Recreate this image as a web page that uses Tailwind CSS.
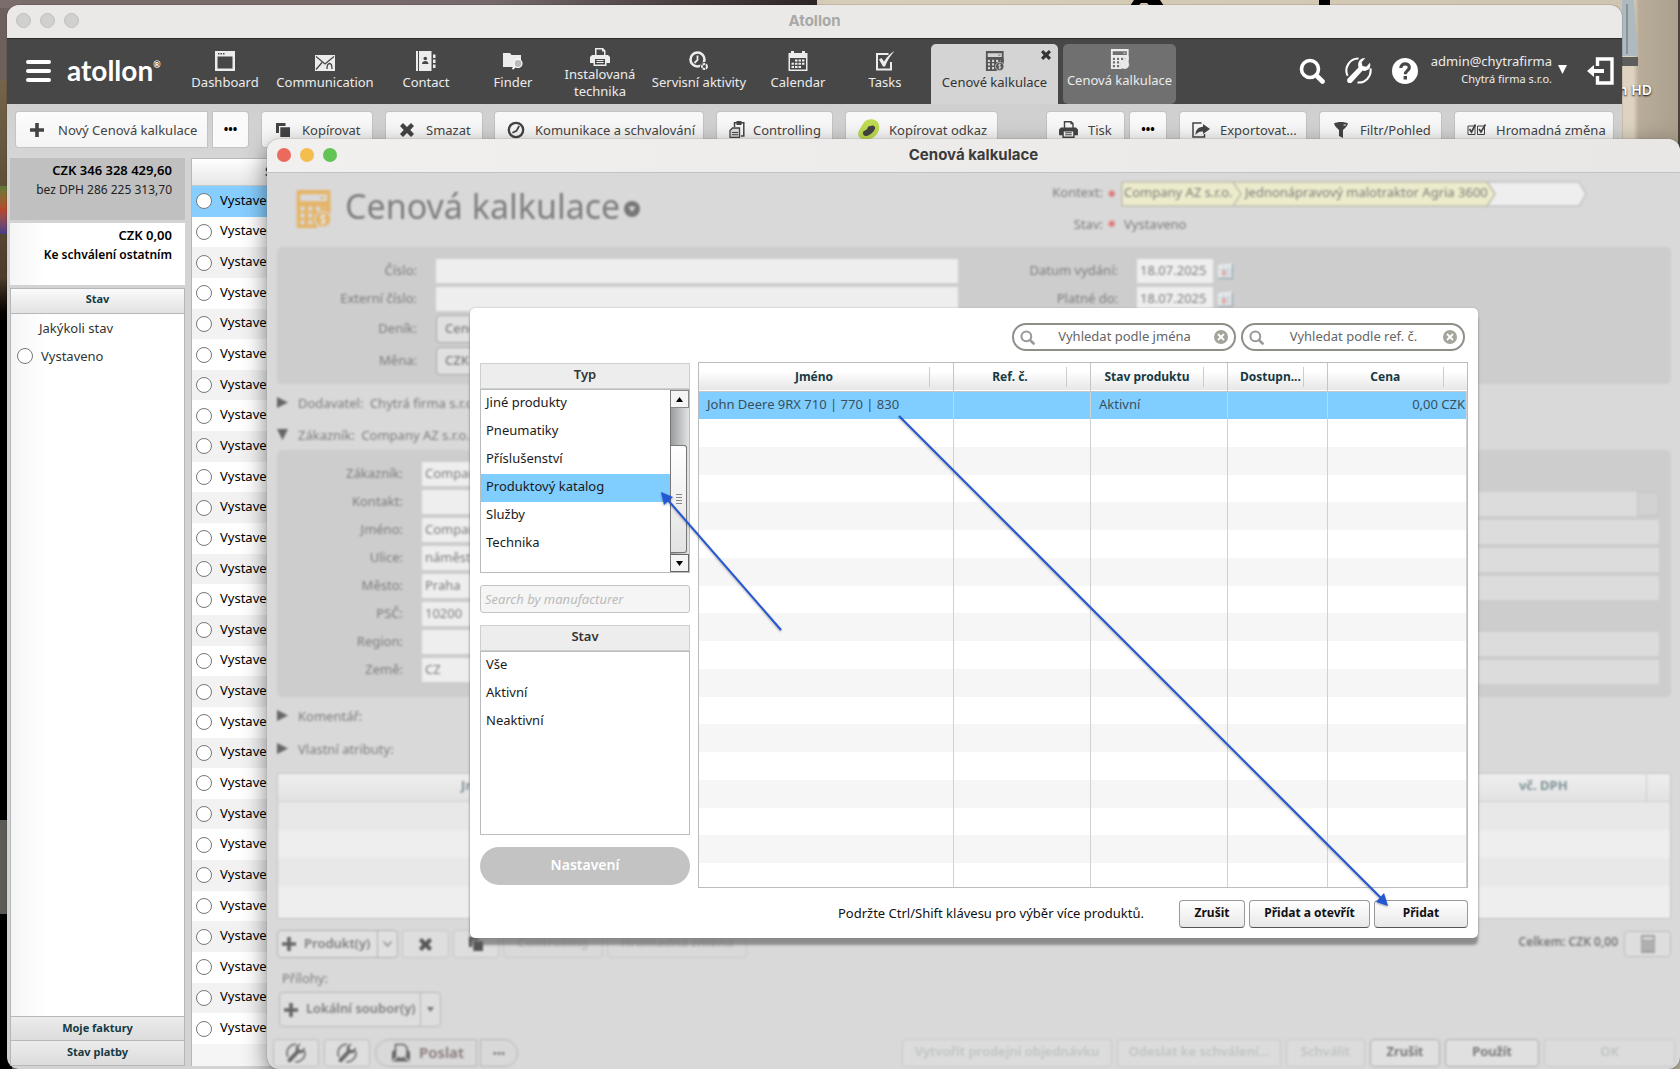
<!DOCTYPE html>
<html lang="cs">
<head>
  <meta charset="UTF-8" />
  <meta name="viewport" content="width=device-width, initial-scale=1.0"/>
  <title>Atollon</title>
  <script src="https://cdn.jsdelivr.net/npm/@tailwindcss/browser@4"></script>
</head>
<body class="relative h-screen overflow-hidden bg-black font-['Noto_Sans','Open_Sans',sans-serif] text-[13px] leading-5 text-[#333]">

  <!-- Icons -->
  <svg class="hidden">
    <symbol id="i-dashboard" viewBox="0 0 20 20"><path fill="currentColor" fill-rule="evenodd" d="M0 0h20v20H0zM2.500 5.500v12h15v-12zM3 2v1.500h1.500V2zM5.500 2v1.500H7V2zM8 2v1.500h1.500V2z"/></symbol>
    <symbol id="i-mail" viewBox="0 0 20 16"><path fill="currentColor" d="M0 0h20v16H0z"/><path d="M1 1.500l9 7.500 9-7.500M1 14.500l6-7M12 14c0-3 .5-5.500 2.500-5.500S17 11 17 14" fill="none" stroke="#474747" stroke-width="1.300"/></symbol>
    <symbol id="i-contact" viewBox="0 0 20 20"><path fill="currentColor" d="M0 0h2v20H0zM3 0h12.500v20H3zM17 3.500h2.500v3.500H17zM17 8.500h2.500V12H17zM17 13.500h2.500V17H17z"/><circle cx="9.300" cy="7.500" r="1.800" fill="#474747"/><path fill="#474747" d="M6 13c0-4 6.500-4 6.500 0z"/></symbol>
    <symbol id="i-finder" viewBox="0 0 20 18"><path fill="currentColor" d="M0 1h7l1.500 2H18v12H0z"/><circle cx="15" cy="11.500" r="4" fill="#b9b9b9" stroke="#fff" stroke-width="1.200"/><path d="M12 14.500L9.500 17" stroke="#fff" stroke-width="1.800"/></symbol>
    <symbol id="i-print" viewBox="0 0 20 18"><path fill="currentColor" fill-rule="evenodd" d="M5 0h8l2.500 2.500V7h2.500l2 2v6h-3.500v3H3.500v-3H0V9l2-2h3zM6.500 1.500V7H14V3.500h-2v-2zM5 11v5.500h10V11z"/><path fill="currentColor" d="M6.500 12h7v1h-7zM6.500 14h7v1h-7z"/></symbol>
    <symbol id="i-clockgear" viewBox="0 0 20 20"><circle cx="8.500" cy="8.500" r="7" fill="none" stroke="currentColor" stroke-width="2.600"/><path d="M8.500 4.500v4.500L5.500 12" fill="none" stroke="currentColor" stroke-width="1.800"/><circle cx="15.500" cy="15.500" r="4.500" fill="#474747"/><circle cx="15.500" cy="15.500" r="2.500" fill="none" stroke="currentColor" stroke-width="2" stroke-dasharray="2.500 .7"/></symbol>
    <symbol id="i-clock" viewBox="0 0 20 20"><circle cx="10" cy="10" r="8" fill="none" stroke="currentColor" stroke-width="2.600"/><path d="M13.500 5.500L10.500 11 6 13" fill="none" stroke="currentColor" stroke-width="2"/></symbol>
    <symbol id="i-calendar" viewBox="0 0 20 20"><path fill="currentColor" fill-rule="evenodd" d="M.5 2H3V0h3v2h8V0h3v2h2.500v18H.5zM2 7v11.500h16V7z"/><path fill="currentColor" d="M7 8.500h2.500v2H7zM10.500 8.500H13v2h-2.500zM14 8.500h2.500v2H14zM3.500 11.700H6v2H3.500zM7 11.700h2.500v2H7zM10.500 11.700H13v2h-2.500zM14 11.700h2.500v2H14zM3.500 15H6v2H3.500zM7 15h2.500v2H7zM10.500 15H13v2h-2.500z"/></symbol>
    <symbol id="i-tasks" viewBox="0 0 20 20"><path d="M13.500 3H2v15.500h14V11" fill="none" stroke="currentColor" stroke-width="2"/><path fill="currentColor" d="M4 8.500l2.500-1.500L9 10.500C12 6 15 2.500 19.500 0 15.500 4.500 12.500 9 10 15.500H8z"/></symbol>
    <symbol id="i-calc" viewBox="0 0 20 22"><path fill="currentColor" fill-rule="evenodd" d="M0 0h19.500v12.500H16V9H0zM2 2.500v4h15.500v-4z"/><path fill="currentColor" fill-rule="evenodd" d="M0 8h19.500v6l-8 8H0zM2.200 9.500V12h2.300V9.500zM6.700 9.500V12H9V9.500zM11.200 9.500V12h2.300V9.500zM15.500 9.500V11h2V9.500zM2.200 13.500V16h2.300v-2.500zM6.700 13.500V16H9v-2.500zM2.200 17.500V20h2.300v-2.500zM6.700 17.500V20H9v-2.500z"/><path fill="currentColor" d="M13.500 4h2.500v1h-2.500z"/><circle cx="15.200" cy="17" r="4.600" fill="currentColor" stroke="#d8d8d8" stroke-width=".8"/><path d="M16.700 15.200c-1-1-3-.5-2.800.6.2 1.300 2.800.8 2.700 2.200-.1 1.200-2.100 1.400-3 .4M15.200 13.800v6.400" fill="none" stroke="#e2e2e2" stroke-width=".8"/></symbol>
    <symbol id="i-search" viewBox="0 0 26 26"><circle cx="11" cy="11" r="8.500" fill="none" stroke="currentColor" stroke-width="3.600"/><path d="M17.500 17.500l6 6" stroke="currentColor" stroke-width="4.600" stroke-linecap="round"/></symbol>
    <symbol id="i-wrench" viewBox="0 0 26 26"><path d="M2.500 18A11.500 11.500 0 0 1 13 1.500M24.500 11A11.500 11.500 0 0 1 12 24.500" fill="none" stroke="currentColor" stroke-width="2"/><path fill="currentColor" d="M19.500 1l-3.500 4 .8 3.700 3.800.6L24 5.500c1.800 5-2.500 9-7 7.600L6.500 24.500c-2.500 2-6-1-3.800-3.800L13 10c-1.500-4.800 2-9.500 6.500-9z"/></symbol>
    <symbol id="i-help" viewBox="0 0 26 26"><circle cx="13" cy="13" r="13" fill="currentColor"/><path d="M8.800 10c0-5.600 8.700-5.200 8.500-.4-.1 3-4 3.200-4 6.600" fill="none" stroke="#474747" stroke-width="3.200"/><path fill="#474747" d="M11.600 18h3.400v3.400h-3.400z"/></symbol>
    <symbol id="i-logout" viewBox="0 0 27 28"><path d="M10.500 9V2H25v24H10.500v-7" fill="none" stroke="currentColor" stroke-width="3.400"/><path fill="currentColor" d="M0 14l7-6v4h10v4H7v4z"/></symbol>
    <symbol id="i-plus" viewBox="0 0 14 14"><path fill="currentColor" d="M5.200 0h3.600v5.200H14v3.600H8.800V14H5.200V8.800H0V5.200h5.200z"/></symbol>
    <symbol id="i-x" viewBox="0 0 14 14"><path fill="currentColor" d="M3 0l4 4 4-4 3 3-3.700 4L14 11l-3 3-4-4-4 4-3-3 3.700-4L0 3z"/></symbol>
    <symbol id="i-copy" viewBox="0 0 14 14"><path fill="currentColor" d="M0 0h9.500v3H3v7H0zM4.300 4.300H14V14H4.300z"/></symbol>
    <symbol id="i-clipboard" viewBox="0 0 16 17"><path d="M5.500 6V1.800h9.300V15h-3" fill="none" stroke="currentColor" stroke-width="1.500"/><path fill="currentColor" d="M7.500 0h5v4h-5z"/><path d="M3.500 7h7v9.300H1V9.500z" fill="#ddd" stroke="currentColor" stroke-width="1.300"/><path d="M3 11.500h6M3 13.700h6" stroke="currentColor"/></symbol>
    <symbol id="i-export" viewBox="0 0 18 16"><path d="M9.500 1H1v14h11.500v-3" fill="none" stroke="currentColor" stroke-width="1.500"/><path fill="currentColor" d="M11 2l7 5-7 5V9.500c-3.500-.5-5.500.8-7.500 3.500C3.500 8 6.500 5 11 4.800z"/></symbol>
    <symbol id="i-filter" viewBox="0 0 14 16"><path fill="currentColor" d="M0 1.500C3-.5 11-.5 14 1.500 13.500 4 11 6 9 8v8l-4-2V8C3 6 .5 4 0 1.500z"/><path d="M9.500 3h2.500" stroke="#eee"/></symbol>
    <symbol id="i-checks" viewBox="0 0 19 12"><path d="M1 2h7v8.500H1zM10.500 2h7v8.500h-7z" fill="none" stroke="currentColor"/><path d="M2.500 5L4.500 8 8.500.5M12 5l2 3L18.500.5" fill="none" stroke="currentColor" stroke-width="1.700"/></symbol>
    <symbol id="i-send" viewBox="0 0 20 20"><path fill="currentColor" d="M1 9l3-3v6l6 3 6-3V6l3 3v9.500H1z"/><path d="M4.500 12V1.500h8.500l3 3V12" fill="none" stroke="currentColor" stroke-width="1.500"/><path d="M1.500 18l5.500-4.500M18.500 18L13 13.500" fill="none" stroke="#ddd" stroke-width="1.200"/></symbol>
    <symbol id="i-date" viewBox="0 0 15 16"><path fill="#e6eaec" d="M0 2l15-2v15H0z"/><path d="M0 15.500h14.500V1" fill="none" stroke="#8fa3ad" stroke-width="1.400"/><path d="M1 7h13M1 11h13M5.500 3v12M10 3v12" stroke="#b3c2ca" stroke-width=".8"/><path fill="#e5a9a6" d="M4 7.500h4v5H4z"/></symbol>
    <symbol id="i-clear" viewBox="0 0 14 14"><circle cx="7" cy="7" r="7" fill="#a4a49b"/><path d="M4 4l6 6M10 4l-6 6" stroke="#fff" stroke-width="1.800"/></symbol>
  </svg>

  <!-- Desktop wallpaper -->
  <div class="absolute inset-0 bg-linear-to-r from-[#6d5f5c] via-[#d8cdb8] via-50% to-[#cfc4ae]"></div>
  <div class="absolute left-0 top-0 h-2 w-[817px] bg-linear-to-r from-[#7b6d6a] via-[#75696a] via-60% to-[#2d2525]"></div>
  <svg class="absolute right-[350px] top-0 h-[6px] w-[208px]" viewBox="0 0 208 6"><path d="M12 0h26l4 6H28l-3-3h-6l-3 3H8zM197 0h11v6h-11z"/></svg>
  <div class="absolute bottom-0 left-0 top-20 w-3 bg-linear-to-b from-[#75644a] from-0% via-[#4c3d2b] via-20% to-black to-25%"></div>
  <div class="absolute left-0 top-[186px] h-12 w-2 bg-linear-to-b from-[#5c7a37] via-[#b5462c] to-[#4b3c86]"></div>
  <div class="absolute bottom-[155px] left-0 h-[94px] w-2 bg-[#5b5a54]"></div>
  <div class="absolute right-0 top-0 h-40 w-[58px] border-r-2 border-[#4a443c] bg-linear-to-r from-[#ddd3c0] from-20% via-[#b9ad9a] via-30% to-[#ab9f8e]"></div>
  <svg class="absolute right-[42px] top-0 h-[68px] w-4" viewBox="0 0 16 68"><path fill="#aebac0" d="M0 0h12l4 56H0z"/><path fill="#5d5d5b" d="M0 57h16v9H0z"/><path d="M5 4v50" stroke="#60686c"/></svg>
  <span class="absolute right-7 top-20 text-[14px] font-semibold text-white [text-shadow:0_1px_2px_#000]">n HD</span>

  <!-- Main window -->
  <div class="absolute bottom-0 left-[7px] right-[58px] top-[5px] flex flex-col overflow-hidden rounded-xl bg-[#d3d3d3] shadow-[0_0_1px_#000]">
    <div class="flex h-[33px] shrink-0 items-center bg-[#eae9e7] px-[9px] pb-[2px]">
      <div class="flex flex-1 gap-[9px]">
        <span class="h-[15px] w-[15px] rounded-full border border-[#bfbfbd] bg-[#d0d0ce]"></span>
        <span class="h-[15px] w-[15px] rounded-full border border-[#bfbfbd] bg-[#d0d0ce]"></span>
        <span class="h-[15px] w-[15px] rounded-full border border-[#bfbfbd] bg-[#d0d0ce]"></span>
      </div>
      <h1 class="font-[Inter,sans-serif] text-[15px] font-bold text-[#a8a8a6]">Atollon</h1>
      <div class="flex-1"></div>
    </div>

    <!-- Navigation -->
    <nav class="flex h-[66px] shrink-0 border-t border-[#2c2c2c] bg-[#474747] text-[#ececec]">
      <button class="ml-[19px] flex w-[25px] flex-col justify-center gap-[5px] pb-[2px]" aria-label="Menu">
        <span class="h-1 w-full rounded-sm bg-white"></span>
        <span class="h-1 w-full rounded-sm bg-white"></span>
        <span class="h-1 w-full rounded-sm bg-white"></span>
      </button>
      <div class="ml-4 flex w-[108px] items-center pb-1 font-[Lato,sans-serif] text-[28px] font-bold text-white">atollon<sup class="text-[9px]">®</sup></div>
      <a href="#" class="flex w-[100px] flex-col items-center gap-px pt-3"><svg class="h-5 w-5"><use href="#i-dashboard"/></svg>Dashboard</a>
      <a href="#" class="flex w-[100px] flex-col items-center gap-px pt-3"><svg class="h-5 w-5 pt-1"><use href="#i-mail"/></svg>Communication</a>
      <a href="#" class="flex w-[102px] flex-col items-center gap-px pt-3"><svg class="h-5 w-5"><use href="#i-contact"/></svg>Contact</a>
      <a href="#" class="flex w-[72px] flex-col items-center gap-px pt-3"><svg class="h-5 w-5"><use href="#i-finder"/></svg>Finder</a>
      <a href="#" class="flex w-[102px] flex-col items-center pt-[9px] text-center leading-[17px]"><svg class="h-[18px] w-5"><use href="#i-print"/></svg>Instalovaná<br>technika</a>
      <a href="#" class="flex w-[96px] flex-col items-center gap-px whitespace-nowrap pt-3"><svg class="h-5 w-5"><use href="#i-clockgear"/></svg>Servisní aktivity</a>
      <a href="#" class="flex w-[102px] flex-col items-center gap-px pt-3"><svg class="h-5 w-5"><use href="#i-calendar"/></svg>Calendar</a>
      <a href="#" class="flex w-[72px] flex-col items-center gap-px pt-3"><svg class="h-5 w-5"><use href="#i-tasks"/></svg>Tasks</a>
      <a href="#" class="relative ml-[10px] mt-[5px] flex w-[127px] flex-col items-center gap-px rounded-t-[5px] bg-[#d4d4d4] pt-[7px] text-[#333]"><svg class="h-5 w-5 text-[#555]"><use href="#i-calc"/></svg>Cenové kalkulace<svg class="absolute right-[7px] top-[6px] h-[10px] w-[10px]"><use href="#i-x"/></svg></a>
      <a href="#" class="ml-[5px] mt-[5px] flex w-[113px] flex-col items-center gap-px rounded-[5px] bg-[#707070] pt-[5px]"><svg class="h-5 w-5"><use href="#i-calc"/></svg>Cenová kalkulace</a>
      <div class="ml-auto mr-[8px] flex items-center gap-5 pb-[2px] text-white">
        <button aria-label="Hledat"><svg class="h-[26px] w-[26px]"><use href="#i-search"/></svg></button>
        <button aria-label="Nastavení"><svg class="h-[27px] w-[27px]"><use href="#i-wrench"/></svg></button>
        <button aria-label="Nápověda"><svg class="h-[26px] w-[26px]"><use href="#i-help"/></svg></button>
        <button class="-ml-[7px] flex items-center gap-[6px] pb-[2px] text-right leading-[17px] text-[#ececec]"><span>admin@chytrafirma<br><span class="text-[11px]">Chytrá firma s.r.o.</span></span><svg class="h-[9px] w-[9px]" viewBox="0 0 9 9"><path fill="#fff" d="M0 0h9L4.500 9z"/></svg></button>
        <button aria-label="Odhlásit"><svg class="h-[28px] w-[27px]"><use href="#i-logout"/></svg></button>
      </div>
    </nav>

    <!-- Toolbar -->
    <div class="flex h-[54px] shrink-0 items-start bg-linear-to-b from-[#cfcfcf] to-[#d6d6d6] px-[9px] pt-2 text-[#444]">
      <button class="flex h-[35px] w-[191px] items-center gap-[14px] rounded-l-[3px] bg-linear-to-b from-[#fcfcfc] to-[#f4f4f4] pl-[14px] shadow-[0_0_0_1px_#c3c3c3]"><svg class="h-[14px] w-[14px]"><use href="#i-plus"/></svg>Nový Cenová kalkulace</button>
      <button class="ml-[6px] h-[35px] w-[35px] rounded-r-[3px] bg-[#fafafa] text-[12px] font-bold text-black shadow-[0_0_0_1px_#c3c3c3]">•••</button>
      <button class="ml-[14px] flex h-[35px] w-[110px] items-center gap-3 rounded-[3px] bg-[#f8f8f8] pl-[14px] shadow-[0_0_0_1px_#c3c3c3]"><svg class="h-[14px] w-[14px]"><use href="#i-copy"/></svg>Kopírovat</button>
      <button class="ml-[14px] flex h-[35px] w-[96px] items-center gap-3 rounded-[3px] bg-[#f8f8f8] pl-[14px] shadow-[0_0_0_1px_#c3c3c3]"><svg class="h-[14px] w-[14px]"><use href="#i-x"/></svg>Smazat</button>
      <button class="ml-[13px] flex h-[35px] w-[208px] items-center gap-[10px] rounded-[3px] bg-[#f8f8f8] pl-3 shadow-[0_0_0_1px_#c3c3c3]"><svg class="h-[18px] w-[18px]"><use href="#i-clock"/></svg>Komunikace a schvalování</button>
      <button class="ml-[14px] flex h-[35px] w-[115px] items-center gap-2 rounded-[3px] bg-[#f8f8f8] pl-3 shadow-[0_0_0_1px_#c3c3c3]"><svg class="h-[17px] w-4"><use href="#i-clipboard"/></svg>Controlling</button>
      <button class="ml-[14px] flex h-[35px] w-[151px] items-center gap-[9px] rounded-[3px] bg-[#f8f8f8] pl-3 shadow-[0_0_0_1px_#c3c3c3]"><svg class="h-[22px] w-[22px]" viewBox="0 0 22 22"><path fill="#bfdc52" d="M9 1c5-2 11 0 12 5s-1 9-5 12-11 4-14 1-2-6 0-9 3-7 7-9z"/><path fill="#444" d="M5 14c0-3 3-2 4-4s1-3 3-3 2-1 4 0 1 4-1 6-5 4-7 4-3-1-3-3z"/></svg>Kopírovat odkaz</button>
      <button class="ml-auto flex h-[35px] w-[77px] items-center gap-[10px] rounded-[3px] bg-[#f8f8f8] pl-3 shadow-[0_0_0_1px_#c3c3c3]"><svg class="h-[17px] w-[19px]"><use href="#i-print"/></svg>Tisk</button>
      <button class="ml-[6px] h-[35px] w-9 rounded-[3px] bg-[#fafafa] text-[12px] font-bold text-black shadow-[0_0_0_1px_#c3c3c3]">•••</button>
      <button class="ml-[14px] flex h-[35px] w-[126px] items-center gap-[10px] rounded-[3px] bg-[#f8f8f8] pl-3 shadow-[0_0_0_1px_#c3c3c3]"><svg class="h-4 w-[18px]"><use href="#i-export"/></svg>Exportovat...</button>
      <button class="ml-[14px] flex h-[35px] w-[121px] items-center gap-3 rounded-[3px] bg-[#f8f8f8] pl-[14px] shadow-[0_0_0_1px_#c3c3c3]"><svg class="h-4 w-[14px]"><use href="#i-filter"/></svg>Filtr/Pohled</button>
      <button class="ml-[14px] flex h-[35px] w-[158px] items-center gap-[10px] whitespace-nowrap rounded-[3px] bg-[#f8f8f8] pl-3 shadow-[0_0_0_1px_#c3c3c3]"><svg class="h-3 w-[19px]"><use href="#i-checks"/></svg>Hromadná změna</button>
    </div>

    <div class="flex min-h-0 flex-1 pb-[3px] pl-[3px]">
      <!-- Summary and filters -->
      <aside class="mr-[6px] flex w-[175px] shrink-0 flex-col">
        <div class="h-[62px] bg-[#c0c0c0] pr-[13px] pt-[2px] text-right text-[#222]"><p class="font-semibold text-black">CZK 346 328 429,60</p><p class="text-[12px]">bez DPH 286 225 313,70</p></div>
        <div class="mt-[3px] h-[62px] bg-linear-to-r from-[#f5f5f5] to-white to-20% pr-[13px] pt-[2px] text-right text-black"><p class="font-semibold">CZK 0,00</p><p class="text-[12px] font-semibold">Ke schválení ostatním</p></div>
        <button class="mt-[3px] h-[26px] border border-[#b4b8ba] bg-linear-to-b from-[#fafafa] to-[#e2e2e2] pb-1 text-[11px] font-bold text-[#163a43]">Stav</button>
        <div class="flex-1 border-x border-[#b4b8ba] bg-linear-to-r from-[#f5f5f5] to-white to-20%">
          <p class="pl-7 leading-7">Jakýkoli stav</p>
          <label class="flex h-7 items-center gap-2 pl-[6px]"><input type="radio" name="stav" class="h-4 w-4 appearance-none rounded-full border border-[#777] bg-white"/>Vystaveno</label>
        </div>
        <button class="h-[25px] border border-[#b4b8ba] bg-linear-to-b from-[#ececec] to-[#dcdcdc] pb-[2px] text-[11px] font-bold text-[#163a43]">Moje faktury</button>
        <button class="h-[25px] border border-t-0 border-[#b4b8ba] bg-linear-to-b from-[#ececec] to-[#dcdcdc] pb-[2px] text-[11px] font-bold text-[#163a43]">Stav platby</button>
      </aside>

      <!-- Quotation list -->
      <div class="flex min-w-0 flex-1 flex-col border-l border-t border-[#b4b8ba] bg-[#f5f5f5]">
        <div class="h-[27px] shrink-0 border-b border-[#c8c8c8] bg-linear-to-b from-white to-[#e6e6e6] pl-[73px] font-bold leading-6 text-[#163a43]">Stav</div>
        <div id="quoteList" class="flex min-h-0 flex-1 flex-col"></div>
        <div class="h-[22px] shrink-0"></div>
      </div>
    </div>
  </div>

  <!-- Quotation window -->
  <div class="absolute bottom-0 left-[267px] right-0 top-[139px] flex flex-col overflow-hidden rounded-xl bg-[#d9d9d9] shadow-[0_0_1px_#555,0_8px_24px_rgba(0,0,0,0.5)]">
    <div class="flex h-[34px] shrink-0 items-center border-b border-[#c2c2c2] bg-linear-to-r from-[#f1f0ef] to-[#e8e7e5] px-[10px] pb-[2px]">
      <div class="flex flex-1 gap-[9px]">
        <span class="h-[14px] w-[14px] rounded-full bg-[#ec695e]"></span>
        <span class="h-[14px] w-[14px] rounded-full bg-[#f4be4f]"></span>
        <span class="h-[14px] w-[14px] rounded-full bg-[#61c454]"></span>
      </div>
      <h2 class="font-[Inter,sans-serif] text-[15px] font-bold text-[#3b3b3b]">Cenová kalkulace</h2>
      <div class="flex-1"></div>
    </div>

    <div class="flex flex-1 flex-col pl-[10px] pr-[9px] text-[#7d7d7d] blur-[1px] [&_label]:pb-[3px]">
      <!-- Record header -->
      <header class="flex h-[74px] shrink-0">
        <svg class="ml-[18px] mt-[17px] h-[38px] w-[38px] text-[#e5b468]"><use href="#i-calc"/></svg>
        <h3 class="ml-3 mt-[9px] text-[34px] leading-[48px]">Cenová kalkulace</h3>
        <svg class="ml-1 mt-[28px] h-4 w-4" viewBox="0 0 16 16"><circle cx="8" cy="8" r="8" fill="#777"/><path fill="#d9d9d9" d="M4.500 5.500h7L8 11z"/></svg>
        <div class="ml-auto mr-[84px] grid grid-cols-[auto_18px_466px] content-start items-center gap-y-[7px] pt-[8px]">
          <span class="pb-1 text-right">Kontext:</span><span class="text-center text-[9px] font-bold text-[#df7777]">✱</span>
          <div class="relative flex h-[26px] items-center">
            <svg class="absolute inset-0 h-full w-full" viewBox="0 0 466 26"><path fill="#eee" stroke="#c4c4c4" stroke-width="1.500" d="M366 1h92l7 12-7 12h-92l8-12z"/><path fill="#ecebcb" stroke="#c0c0b0" stroke-width="1.500" d="M112 1h254l8 12-8 12H112l8-12zM1 1h111l8 12-8 12H1z"/></svg>
            <a href="#" class="relative w-[121px] whitespace-nowrap pb-1 pl-[3px]">Company AZ s.r.o.</a><a href="#" class="relative whitespace-nowrap pb-1 pl-[3px]">Jednonápravový malotraktor Agria 3600</a>
          </div>
          <span class="text-right">Stav:</span><span class="text-center text-[9px] font-bold text-[#df7777]">✱</span><span class="pl-[3px]">Vystaveno</span>
        </div>
      </header>

      <!-- Document panel -->
      <section class="flex h-[137px] shrink-0 rounded-[5px] bg-[#cdcdcd] pt-3">
        <div class="grid w-[681px] grid-cols-[140px_1fr] content-start items-center gap-x-[19px] gap-y-1">
          <label for="cislo" class="text-right">Číslo:</label><input id="cislo" class="h-6 bg-[#eee]"/>
          <label for="extcislo" class="text-right">Externí číslo:</label><input id="extcislo" class="h-6 bg-[#eee]"/>
          <label for="denik" class="text-right">Deník:</label><select id="denik" class="h-7 w-40 appearance-none rounded-[4px] border border-[#a9a9a9] bg-[#e0e0e0] pb-[2px] pl-2 font-medium"><option>Cenová kalkulace</option></select>
          <label for="mena" class="text-right">Měna:</label><select id="mena" class="h-7 w-40 appearance-none rounded-[4px] border border-[#a9a9a9] bg-[#e0e0e0] pb-[2px] pl-2 font-medium"><option>CZK</option></select>
        </div>
        <div class="ml-auto mr-[438px] grid grid-cols-[auto_76px_20px] content-start items-center gap-y-1">
          <label for="vydani" class="mr-[19px]">Datum vydání:</label><input id="vydani" value="18.07.2025" class="h-6 w-[76px] bg-[#eee] pb-[3px] pl-[3px]"/><svg class="ml-[5px] h-4 w-[15px]"><use href="#i-date"/></svg>
          <label for="platne" class="mr-[19px] text-right">Platné do:</label><input id="platne" value="18.07.2025" class="h-6 w-[76px] bg-[#eee] pb-[3px] pl-[3px]"/><svg class="ml-[5px] h-4 w-[15px]"><use href="#i-date"/></svg>
        </div>
      </section>

      <button class="mt-[2px] flex h-[33px] shrink-0 items-center gap-[10px]"><svg class="h-[11px] w-[11px]" viewBox="0 0 11 11"><path fill="#666" d="M0 0l11 5.500L0 11z"/></svg>Dodavatel:&ensp;Chytrá firma s.r.o.,</button>
      <button class="flex h-[31px] shrink-0 items-center gap-[10px]"><svg class="h-[11px] w-[11px]" viewBox="0 0 11 11"><path fill="#666" d="M0 0h11L5.500 11z"/></svg>Zákazník:&ensp;Company AZ s.r.o.,</button>

      <!-- Customer panel -->
      <section class="flex h-[247px] shrink-0 justify-between rounded-[5px] bg-[#cdcdcd] pr-3 pt-3">
        <div class="grid w-[680px] grid-cols-[126px_1fr] content-start items-center gap-x-[19px] gap-y-1">
          <label for="zakaznik" class="text-right">Zákazník:</label><input id="zakaznik" value="Company AZ s.r.o." class="h-6 bg-[#eee] pb-[3px] pl-[3px]"/>
          <label for="kontakt" class="text-right">Kontakt:</label><input id="kontakt" class="h-6 bg-[#eee]"/>
          <label for="jmeno" class="text-right">Jméno:</label><input id="jmeno" value="Company AZ s.r.o." class="h-6 bg-[#eee] pb-[3px] pl-[3px]"/>
          <label for="ulice" class="text-right">Ulice:</label><input id="ulice" value="náměstí" class="h-6 bg-[#eee] pb-[3px] pl-[3px]"/>
          <label for="mesto" class="text-right">Město:</label><input id="mesto" value="Praha" class="h-6 bg-[#eee] pb-[3px] pl-[3px]"/>
          <label for="psc" class="text-right">PSČ:</label><input id="psc" value="10200" class="h-6 bg-[#eee] pb-[3px] pl-[3px]"/>
          <label for="region" class="text-right">Region:</label><input id="region" class="h-6 bg-[#eee]"/>
          <label for="zeme" class="text-right">Země:</label><input id="zeme" value="CZ" class="h-6 bg-[#eee] pb-[3px] pl-[3px]"/>
        </div>
        <div class="flex w-[400px] flex-col gap-1 pt-[30px]">
          <div class="flex"><input aria-label="Adresa" class="h-6 flex-1 bg-[#dcdcdc]"/><button aria-label="Vybrat" class="h-6 w-[22px] rounded-r-[3px] border border-[#c2c2c2] bg-[#d2d2d2]"></button></div>
          <input aria-label="Jméno dodání" class="h-6 bg-[#dcdcdc]"/>
          <input aria-label="Ulice dodání" class="h-6 bg-[#dcdcdc]"/>
          <input aria-label="Město dodání" class="h-6 bg-[#dcdcdc]"/>
          <input aria-label="Region dodání" class="mt-7 h-6 bg-[#dcdcdc]"/>
          <input aria-label="Země dodání" class="h-6 bg-[#dcdcdc]"/>
        </div>
      </section>

      <button class="mt-[2px] flex h-[33px] shrink-0 items-center gap-[10px]"><svg class="h-[11px] w-[11px]" viewBox="0 0 11 11"><path fill="#666" d="M0 0l11 5.500L0 11z"/></svg>Komentář:</button>
      <button class="flex h-[33px] shrink-0 items-center gap-[10px]"><svg class="h-[11px] w-[11px]" viewBox="0 0 11 11"><path fill="#666" d="M0 0l11 5.500L0 11z"/></svg>Vlastní atributy:</button>

      <!-- Items -->
      <table class="mt-2 w-full shrink-0 table-fixed border border-[#c6c6c6] bg-[#eee] text-[#7f9296]">
        <thead><tr class="h-7 border-b border-[#cfcfcf] bg-linear-to-b from-[#efefef] to-[#e2e2e2]"><th class="w-[408px] pb-[5px] leading-5">Jméno</th><th></th><th class="w-[206px] pb-[5px] leading-5">vč. DPH</th><th class="w-6 border-l border-[#ccc]"></th></tr></thead>
        <tbody>
          <tr class="h-7 bg-[#e8e8e8]"><td colspan="4"></td></tr>
          <tr class="h-7"><td colspan="4"></td></tr>
          <tr class="h-7 bg-[#e8e8e8]"><td colspan="4"></td></tr>
          <tr class="h-[33px]"><td colspan="4"></td></tr>
        </tbody>
      </table>

      <div class="mt-[11px] flex h-7 shrink-0 items-center gap-1 font-semibold">
        <div class="flex h-7 rounded-[4px] border border-[#b0b0b0] bg-[#e0e0e0]"><button class="flex w-[99px] items-center gap-2 pl-1"><svg class="h-[14px] w-[14px] text-[#666]"><use href="#i-plus"/></svg><span class="pb-[3px]">Produkt(y)</span></button><button aria-label="Další" class="flex w-5 items-center justify-center border-l border-[#b0b0b0]"><svg class="h-[6px] w-[9px]" viewBox="0 0 9 6"><path d="M.5.5l4 4.500 4-4.500" fill="none" stroke="#888" stroke-width="1.300"/></svg></button></div>
        <button aria-label="Smazat" class="flex h-7 w-[47px] items-center justify-center rounded-[4px] border border-[#c5c5c5] bg-[#dedede]"><svg class="h-[13px] w-[13px] text-[#555]"><use href="#i-x"/></svg></button>
        <button aria-label="Kopírovat" class="flex h-7 w-[46px] items-center justify-center rounded-[4px] border border-[#c5c5c5] bg-[#dedede]"><svg class="h-[14px] w-[14px] text-[#555]"><use href="#i-copy"/></svg></button>
        <button class="h-7 w-[100px] rounded-[4px] border border-[#c8c8c8] pb-1 text-[#bcc0be]">Controlling</button>
        <button class="h-7 w-[140px] rounded-[4px] border border-[#c8c8c8] pb-1 text-[#bcc0be]">Hromadná změna</button>
        <span class="ml-auto mr-[2px] pb-1 text-[12px] text-[#777]">Celkem: CZK 0,00</span>
        <button aria-label="Kalkulačka" class="flex h-[26px] w-[47px] items-center justify-center rounded-[4px] border border-[#bdbdbd] bg-[#dedede]"><svg class="h-[18px] w-[14px]" viewBox="0 0 14 18"><path fill="#a3a3a3" d="M0 0h14v18H0z"/><path fill="#d9d9d9" d="M2 2h10v3H2z"/><path d="M1 8h12M1 11h12M1 14h12" stroke="#c8c8c8"/></svg></button>
      </div>

      <p class="mt-[10px] shrink-0 pl-[5px]">Přílohy:</p>
      <div class="ml-[2px] mt-1 flex h-[35px] w-[162px] shrink-0 rounded-[4px] border border-[#b8b8b8] bg-[#dedede] font-semibold"><button class="flex flex-1 items-center gap-2 whitespace-nowrap pl-1"><svg class="h-[14px] w-[14px] text-[#666]"><use href="#i-plus"/></svg><span class="pb-1">Lokální soubor(y)</span></button><button aria-label="Další" class="flex w-5 items-center justify-center border-l border-[#b8b8b8]"><svg class="h-[5px] w-[7px]" viewBox="0 0 7 5"><path fill="#777" d="M0 0h7L3.500 5z"/></svg></button></div>

      <!-- Footer actions -->
      <footer class="-ml-1 -mr-[4px] mt-3 flex h-7 shrink-0 items-center gap-[5px] font-semibold">
        <button aria-label="Nástroje" class="flex h-7 w-[46px] items-center justify-center rounded-[4px] border border-[#bdbdbd] bg-[#dedede]"><svg class="h-5 w-5 text-[#666]"><use href="#i-wrench"/></svg></button>
        <button aria-label="Nástroje" class="flex h-7 w-[46px] items-center justify-center rounded-[4px] border border-[#bdbdbd] bg-[#dedede]"><svg class="h-5 w-5 text-[#666]"><use href="#i-wrench"/></svg></button>
        <button class="flex h-7 w-[102px] items-center gap-2 rounded-l-full border border-[#b5b5b5] pl-[15px] text-[15px] text-[#857a78]"><svg class="h-5 w-5 text-[#666]"><use href="#i-send"/></svg><span class="pb-[2px]">Poslat</span></button>
        <button class="-ml-[2px] h-7 w-[38px] rounded-r-full border border-[#b5b5b5] text-[11px]">•••</button>
        <button class="ml-auto h-7 w-[210px] whitespace-nowrap rounded-[4px] border border-[#c8c8c8] bg-[#dcdcdc] pb-1 text-[#bfc4c1]">Vytvořit prodejní objednávku</button>
        <button class="h-7 w-[164px] whitespace-nowrap rounded-[4px] border border-[#c8c8c8] bg-[#dcdcdc] pb-1 text-[#bfc4c1]">Odeslat ke schválení...</button>
        <button class="h-7 w-[79px] rounded-[4px] border border-[#c8c8c8] bg-[#dcdcdc] pb-1 text-[#bfc4c1]">Schválit</button>
        <button class="h-7 w-[70px] rounded-[4px] border border-[#adadad] bg-[#e0e0e0] pb-1 text-[#6b6b6b]">Zrušit</button>
        <button class="h-7 w-[94px] rounded-[4px] border border-[#adadad] bg-[#e0e0e0] pb-1 text-[#6b6b6b]">Použít</button>
        <button class="h-7 w-[131px] rounded-[4px] border border-[#c8c8c8] bg-[#dcdcdc] pb-1 text-[#bfc4c1]">OK</button>
      </footer>
    </div>
  </div>

  <!-- Product picker -->
  <div role="dialog" aria-label="Výběr produktu" class="absolute left-[470px] right-[202px] top-[308px] flex h-[630px] flex-col rounded-[5px] bg-white px-[10px] shadow-[0_7px_3px_rgba(90,90,90,0.6),0_0_2px_#aaa]">
    <div class="flex h-[54px] shrink-0 items-start justify-end gap-[5px] pr-[3px] pt-[15px] text-[#666]">
      <label class="flex h-7 w-[224px] items-center rounded-full border-2 border-[#8f8f88] px-[6px]"><svg class="h-[15px] w-[15px] text-[#999]"><use href="#i-search"/></svg><input placeholder="Vyhledat podle jména" class="min-w-0 flex-1 pb-[2px] text-center placeholder:text-[#666]"/><svg class="h-[14px] w-[14px]"><use href="#i-clear"/></svg></label>
      <label class="flex h-7 w-[224px] items-center rounded-full border-2 border-[#8f8f88] px-[6px]"><svg class="h-[15px] w-[15px] text-[#999]"><use href="#i-search"/></svg><input placeholder="Vyhledat podle ref. č." class="min-w-0 flex-1 pb-[2px] text-center placeholder:text-[#666]"/><svg class="h-[14px] w-[14px]"><use href="#i-clear"/></svg></label>
    </div>

    <div class="flex gap-2">
      <div class="flex w-[210px] shrink-0 flex-col text-[#1a1a1a]">
        <h4 class="mt-px h-[26px] border border-[#ccd0d1] bg-[#ededed] text-center font-semibold leading-5 text-[#333]">Typ</h4>
        <div class="flex h-[184px] border border-[#b9bdbf]">
          <ul class="flex-1 leading-6 [&>li]:pb-1 [&>li]:pl-[5px]">
            <li>Jiné produkty</li>
            <li>Pneumatiky</li>
            <li>Příslušenství</li>
            <li class="bg-[#80cdff]">Produktový katalog</li>
            <li>Služby</li>
            <li>Technika</li>
          </ul>
          <div class="flex w-[19px] flex-col border-l border-[#777] bg-linear-to-r from-[#9a9d9f] to-[#e4e4e4]">
            <button aria-label="Nahoru" class="flex h-[18px] items-center justify-center border border-l-0 border-[#888] bg-[#f4f4f4]"><svg class="h-[5px] w-[7px]" viewBox="0 0 7 5"><path d="M0 5h7L3.500 0z"/></svg></button>
            <div class="mt-[37px] flex h-[108px] w-4 flex-col items-center justify-center gap-[2px] rounded-r-[3px] border border-l-0 border-[#777] bg-linear-to-b from-white to-[#e2e2e2]"><i class="h-px w-[6px] bg-[#888]"></i><i class="h-px w-[6px] bg-[#888]"></i><i class="h-px w-[6px] bg-[#888]"></i><i class="h-px w-[6px] bg-[#888]"></i></div>
            <button aria-label="Dolů" class="mt-auto flex h-[18px] items-center justify-center border border-l-0 border-[#666] bg-[#f4f4f4]"><svg class="h-[5px] w-[7px]" viewBox="0 0 7 5"><path d="M0 0h7L3.500 5z"/></svg></button>
          </div>
        </div>
        <input aria-label="Search by manufacturer" placeholder="Search by manufacturer" class="mt-3 h-7 rounded-[3px] border border-[#c3c3c3] bg-[#f5f5f5] pl-1 italic placeholder:text-[#bbb]"/>
        <h4 class="mt-3 h-[26px] border border-[#ccd0d1] bg-[#ededed] text-center font-semibold leading-5 text-[#333]">Stav</h4>
        <ul class="h-[184px] border border-[#b9bdbf] leading-6 [&>li]:pb-1 [&>li]:pl-[5px]">
          <li>Vše</li>
          <li>Aktivní</li>
          <li>Neaktivní</li>
        </ul>
        <button class="mt-3 h-[38px] rounded-full bg-[#c3c3c3] pb-[2px] text-[14px] font-semibold text-white">Nastavení</button>
      </div>

      <div class="h-[526px] min-w-0 flex-1 overflow-hidden border border-[#b9bdbf]">
        <table class="w-full table-fixed border-collapse">
          <thead>
            <tr class="h-7 border-b border-[#c5c5c5] bg-linear-to-b from-white from-30% to-[#e6e6e6] text-[12px] text-[#163a43]">
              <th class="border-r border-[#c4c7c8] p-0"><div class="mr-[23px] border-r border-[#ccc]">Jméno</div></th>
              <th class="w-[137px] border-r border-[#c4c7c8] p-0"><div class="mr-[23px] border-r border-[#ccc]">Ref. č.</div></th>
              <th class="w-[137px] border-r border-[#c4c7c8] p-0"><div class="mr-[23px] border-r border-[#ccc]">Stav produktu</div></th>
              <th class="w-[100px] border-r border-[#c4c7c8] p-0"><div class="mr-[23px] border-r border-[#ccc] pl-3 text-left">Dostupn...</div></th>
              <th class="w-[139px] p-0"><div class="mr-[23px] border-r border-[#ccc]">Cena</div></th>
            </tr>
          </thead>
          <tbody id="productRows" class="[&_td]:border-r [&_td]:border-[#cfd1d2] [&_td]:p-0 [&_td]:pb-[3px] [&_tr]:h-7 [&_tr:nth-child(4n)]:h-[27px] [&_tr:nth-child(odd)]:bg-[#f6f6f6]">
            <tr class="bg-[#80cdff]! text-[#36505f]"><td class="pl-2!">John Deere 9RX 710 | 770 | 830</td><td></td><td class="pl-2!">Aktivní</td><td></td><td class="pr-px! text-right">0,00 CZK</td></tr>
          </tbody>
        </table>
      </div>
    </div>

    <div class="flex flex-1 items-center justify-end gap-1 pt-px text-[#111]">
      <p class="mr-[31px] pb-[2px]">Podržte Ctrl/Shift klávesu pro výběr více produktů.</p>
      <button class="h-7 w-[66px] rounded-[4px] border border-[#999] border-b-[#555] bg-linear-to-b from-white to-[#e8e8e8] pb-[2px] text-[12px] font-bold">Zrušit</button>
      <button class="h-7 w-[121px] whitespace-nowrap rounded-[4px] border border-[#999] border-b-[#555] bg-linear-to-b from-white to-[#e8e8e8] pb-[2px] text-[12px] font-bold">Přidat a otevřít</button>
      <button class="h-7 w-[94px] rounded-[4px] border border-[#999] border-b-[#555] bg-linear-to-b from-white to-[#e8e8e8] pb-[2px] text-[12px] font-bold">Přidat</button>
    </div>
  </div>

  <!-- Arrows -->
  <svg class="pointer-events-none absolute left-0 top-0 h-[1069px] w-[1680px] drop-shadow-[0_1px_1px_rgba(0,0,0,0.35)]" viewBox="0 0 1680 1069" fill="#2357d3" stroke="#2357d3" stroke-width="2">
    <path d="M781 630L667 499M899 416L1382 899"/>
    <path stroke="none" d="M661 492l12 5-9 8zM1388 906l-12-4 8-9z"/>
  </svg>

  <script>
    // Quotation list, first row selected
    let list = '';
    for (let i = 0; i < 28; i++) {
      const bg = i === 0 ? 'bg-[#86ceff]' : i % 2 ? 'bg-white' : 'bg-[#f2f2f2]';
      list += `<label class="flex flex-1 items-center gap-2 pl-1 text-black ${bg}"><input type="radio" name="quote" class="h-4 w-4 appearance-none rounded-full border border-[#777] bg-white"/><span class="pb-[3px]">Vystaveno</span></label>`;
    }
    document.getElementById('quoteList').innerHTML = list;

    // Empty rows below the found product
    for (let i = 0; i < 17; i++) {
      const tr = document.createElement('tr');
      tr.innerHTML = '<td></td><td></td><td></td><td></td><td></td>';
      document.getElementById('productRows').appendChild(tr);
    }
  </script>
</body>
</html>
